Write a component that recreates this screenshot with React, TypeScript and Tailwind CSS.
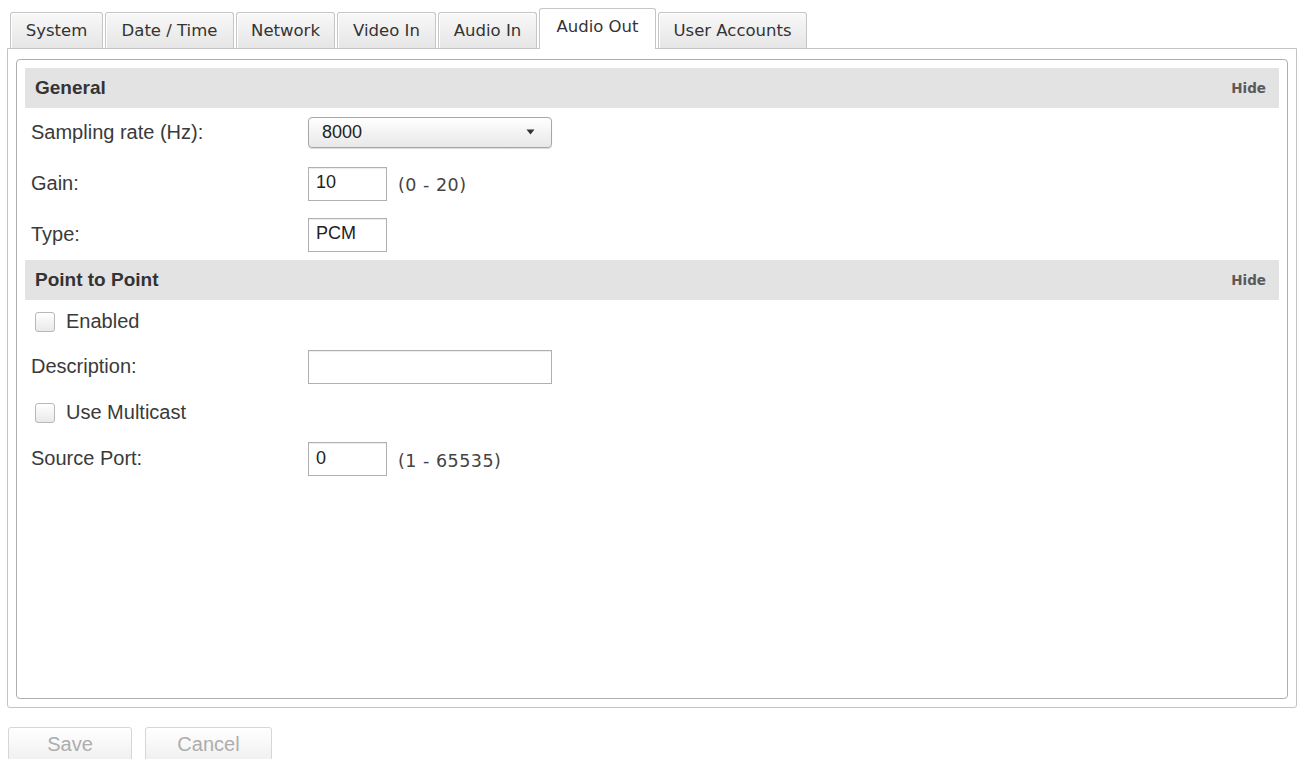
import React from "react";

const tabs = [
  { label: "System", w: "w-[93px]" },
  { label: "Date / Time", w: "w-[129px]" },
  { label: "Network", w: "w-[99px]" },
  { label: "Video In", w: "w-[99px]" },
  { label: "Audio In", w: "w-[99px]" },
  { label: "Audio Out", w: "w-[117px]", active: true },
  { label: "User Accounts", w: "w-[149px]" },
];

function Tab({ label, w, active }: { label: string; w: string; active?: boolean }) {
  if (active) {
    return (
      <div
        className={`${w} h-[41px] -mb-px relative z-10 bg-white border border-b-0 border-[#c6c6c6] rounded-t-[3px] pt-[7px] text-center leading-[22px]`}
      >
        {label}
      </div>
    );
  }
  return (
    <div
      className={`${w} h-[36px] border border-b-0 border-[#c6c6c6] rounded-t-[3px] bg-gradient-to-b from-[#f8f8f8] to-[#e6e6e6] shadow-[inset_1px_1px_0_#ffffff] pt-[7px] text-center leading-[22px]`}
    >
      {label}
    </div>
  );
}

function SectionHeader({ title, h }: { title: string; h: string }) {
  return (
    <div className={`${h} bg-[#e3e3e3] flex items-center justify-between pl-[10px] pr-[13px]`}>
      <span className="text-[19px] font-bold text-[#333]">{title}</span>
      <span className="font-['DejaVu_Sans',Verdana,sans-serif] text-[13.5px] font-bold text-[#5a5a5a]">Hide</span>
    </div>
  );
}

function Label({ children }: { children: React.ReactNode }) {
  return <div className="w-[283px] pl-[6px] -mt-[2px] text-[20px] text-[#3a3a3a]">{children}</div>;
}

function Hint({ children }: { children: React.ReactNode }) {
  return (
    <span className="ml-[11px] mt-[4px] font-['DejaVu_Sans',Verdana,sans-serif] text-[17.5px] tracking-[0.5px] text-[#444]">
      {children}
    </span>
  );
}

function TextBox({ value, w }: { value: string; w: string }) {
  return (
    <div
      className={`${w} h-[34px] border border-[#b0b0b0] bg-white flex items-center pl-[7px] pb-[2px] text-[18px] text-[#222] shadow-[inset_0_1px_1px_rgba(0,0,0,0.08)]`}
    >
      {value}
    </div>
  );
}

function CheckRow({ label, h }: { label: string; h: string }) {
  return (
    <div className={`${h} flex items-center pl-[10px]`}>
      <div className="w-[20px] h-[20px] rounded-[3px] border border-[#b8b8b8] bg-gradient-to-b from-[#ffffff] to-[#e9e9e9]" />
      <span className="ml-[11px] -mt-[2px] text-[20px] text-[#3a3a3a]">{label}</span>
    </div>
  );
}

export default function App() {
  return (
    <div className="w-[1298px] h-[759px] bg-white overflow-hidden font-['Liberation_Sans',Arial,sans-serif]">
      {/* tab strip */}
      <div className="h-[48px] flex items-end gap-[2px] pl-[10px] font-['DejaVu_Sans',Verdana,sans-serif] text-[16.5px] text-[#333]">
        {tabs.map((t) => (
          <Tab key={t.label} {...t} />
        ))}
      </div>

      {/* tab panel */}
      <div className="ml-[7px] mr-[1px] h-[660px] border border-[#c4c4c4] rounded-b-[3px] pt-[10px] px-[8px] pb-[8px]">
        <div className="h-[640px] border border-[#aeaeae] rounded-[4px] p-[8px]">
          <SectionHeader title="General" h="h-[40px]" />

          <div className="h-[50px] flex items-center">
            <Label>Sampling rate (Hz):</Label>
            <div className="w-[244px] h-[31px] -mt-[2px] rounded-[4px] border border-[#a6a6a6] bg-gradient-to-b from-[#ffffff] to-[#e8e8e8] shadow-[0_1px_1px_rgba(0,0,0,0.15)] flex items-center justify-between pl-[13px] pr-[16px] text-[18px] text-[#222]">
              <span>8000</span>
              <svg width="9" height="6" viewBox="0 0 9 6">
                <path d="M0.5 0.5 L8.5 0.5 L4.5 5.5 Z" fill="#333" />
              </svg>
            </div>
          </div>

          <div className="h-[51px] flex items-center">
            <Label>Gain:</Label>
            <TextBox value="10" w="w-[79px]" />
            <Hint>(0 - 20)</Hint>
          </div>

          <div className="h-[51px] flex items-center">
            <Label>Type:</Label>
            <TextBox value="PCM" w="w-[79px]" />
          </div>

          <SectionHeader title="Point to Point" h="h-[40px]" />

          <CheckRow label="Enabled" h="h-[44px]" />

          <div className="h-[46px] flex items-center">
            <Label>Description:</Label>
            <TextBox value="" w="w-[244px]" />
          </div>

          <CheckRow label="Use Multicast" h="h-[46px]" />

          <div className="h-[46px] flex items-center">
            <Label>Source Port:</Label>
            <TextBox value="0" w="w-[79px]" />
            <Hint>(1 - 65535)</Hint>
          </div>
        </div>
      </div>

      {/* action buttons */}
      <div className="mt-[19px] flex gap-[13px] pl-[8px]">
        <div className="w-[124px] h-[34px] border border-[#d6d6d6] rounded-[3px] bg-gradient-to-b from-[#ffffff] to-[#f0f0f0] flex items-center justify-center text-[20px] text-[#adadad]">
          Save
        </div>
        <div className="w-[127px] h-[34px] border border-[#d6d6d6] rounded-[3px] bg-gradient-to-b from-[#ffffff] to-[#f0f0f0] flex items-center justify-center text-[20px] text-[#adadad]">
          Cancel
        </div>
      </div>
    </div>
  );
}
